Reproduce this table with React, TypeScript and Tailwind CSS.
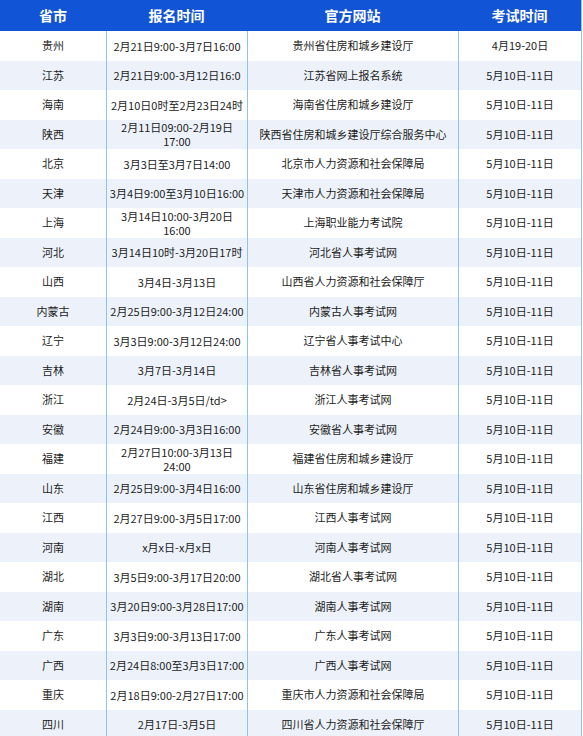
import React from "react";

type Row = {
  province: string;
  signup: string[];
  site: string;
  exam: string;
};

const rows: Row[] = [
  { province: "贵州", signup: ["2月21日9:00-3月7日16:00"], site: "贵州省住房和城乡建设厅", exam: "4月19-20日" },
  { province: "江苏", signup: ["2月21日9:00-3月12日16:0"], site: "江苏省网上报名系统", exam: "5月10日-11日" },
  { province: "海南", signup: ["2月10日0时至2月23日24时"], site: "海南省住房和城乡建设厅", exam: "5月10日-11日" },
  { province: "陕西", signup: ["2月11日09:00-2月19日", "17:00"], site: "陕西省住房和城乡建设厅综合服务中心", exam: "5月10日-11日" },
  { province: "北京", signup: ["3月3日至3月7日14:00"], site: "北京市人力资源和社会保障局", exam: "5月10日-11日" },
  { province: "天津", signup: ["3月4日9:00至3月10日16:00"], site: "天津市人力资源和社会保障局", exam: "5月10日-11日" },
  { province: "上海", signup: ["3月14日10:00-3月20日", "16:00"], site: "上海职业能力考试院", exam: "5月10日-11日" },
  { province: "河北", signup: ["3月14日10时-3月20日17时"], site: "河北省人事考试网", exam: "5月10日-11日" },
  { province: "山西", signup: ["3月4日-3月13日"], site: "山西省人力资源和社会保障厅", exam: "5月10日-11日" },
  { province: "内蒙古", signup: ["2月25日9:00-3月12日24:00"], site: "内蒙古人事考试网", exam: "5月10日-11日" },
  { province: "辽宁", signup: ["3月3日9:00-3月12日24:00"], site: "辽宁省人事考试中心", exam: "5月10日-11日" },
  { province: "吉林", signup: ["3月7日-3月14日"], site: "吉林省人事考试网", exam: "5月10日-11日" },
  { province: "浙江", signup: ["2月24日-3月5日/td>"], site: "浙江人事考试网", exam: "5月10日-11日" },
  { province: "安徽", signup: ["2月24日9:00-3月3日16:00"], site: "安徽省人事考试网", exam: "5月10日-11日" },
  { province: "福建", signup: ["2月27日10:00-3月13日", "24:00"], site: "福建省住房和城乡建设厅", exam: "5月10日-11日" },
  { province: "山东", signup: ["2月25日9:00-3月4日16:00"], site: "山东省住房和城乡建设厅", exam: "5月10日-11日" },
  { province: "江西", signup: ["2月27日9:00-3月5日17:00"], site: "江西人事考试网", exam: "5月10日-11日" },
  { province: "河南", signup: ["x月x日-x月x日"], site: "河南人事考试网", exam: "5月10日-11日" },
  { province: "湖北", signup: ["3月5日9:00-3月17日20:00"], site: "湖北省人事考试网", exam: "5月10日-11日" },
  { province: "湖南", signup: ["3月20日9:00-3月28日17:00"], site: "湖南人事考试网", exam: "5月10日-11日" },
  { province: "广东", signup: ["3月3日9:00-3月13日17:00"], site: "广东人事考试网", exam: "5月10日-11日" },
  { province: "广西", signup: ["2月24日8:00至3月3日17:00"], site: "广西人事考试网", exam: "5月10日-11日" },
  { province: "重庆", signup: ["2月18日9:00-2月27日17:00"], site: "重庆市人力资源和社会保障局", exam: "5月10日-11日" },
  { province: "四川", signup: ["2月17日-3月5日"], site: "四川省人力资源和社会保障厅", exam: "5月10日-11日" },
];

const font = { fontFamily: '"Noto Sans CJK SC", "Noto Sans", sans-serif' };

export default function App() {
  return (
    <div className="w-[583px] h-[736px] overflow-hidden bg-white" style={font}>
      <div className="w-[582px] border-r border-[#8ec3ea]">
        {/* 表头 */}
        <div className="grid grid-cols-[106px_141px_211px_123px] h-[31px] bg-[#1254d6] text-white text-[14px] font-bold">
          {["省市", "报名时间", "官方网站", "考试时间"].map((h) => (
            <div key={h} className="flex items-center justify-center">
              {h}
            </div>
          ))}
        </div>

        {/* 内容 */}
        {rows.map((r, i) => (
          <div
            key={r.province}
            className={`grid grid-cols-[106px_141px_211px_123px] h-[29.5px] text-[11px] leading-[15px] text-[#1c1c1c] ${
              i % 2 === 1 ? "bg-[#edf2fa]" : "bg-white"
            }`}
          >
            <div className="flex items-center justify-center">{r.province}</div>
            <div className="flex flex-col items-center justify-center border-l border-[#8ec3ea] whitespace-nowrap">
              {r.signup.map((s) => (
                <span key={s} className="leading-[14px]">
                  {s}
                </span>
              ))}
            </div>
            <div className="flex items-center justify-center border-l border-[#8ec3ea] whitespace-nowrap">
              {r.site}
            </div>
            <div className="flex items-center justify-center border-l border-[#8ec3ea]">{r.exam}</div>
          </div>
        ))}
      </div>
    </div>
  );
}
